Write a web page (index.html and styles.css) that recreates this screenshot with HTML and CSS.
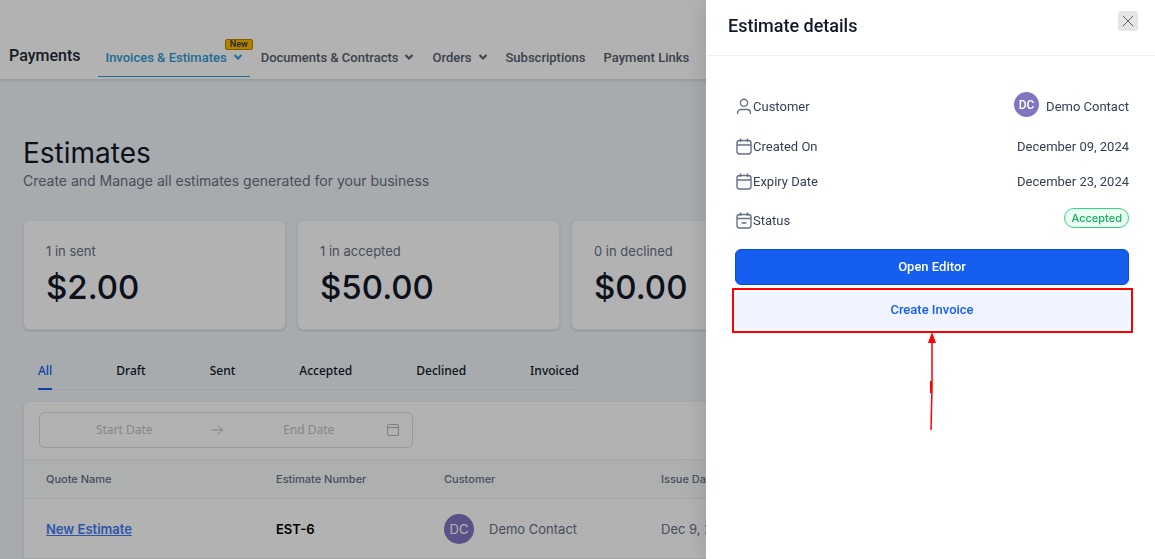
FILE: index.html
```
<!DOCTYPE html>
<html lang="en">
<head>
    <meta charset="UTF-8">
    <meta name="viewport" content="width=device-width, initial-scale=1.0">
    <title>Estimates</title>
    <link rel="stylesheet" href="styles.css">
</head>
<body>
    <header class="topbar">
        <h2 class="topbar-title">Payments</h2>
        <nav class="topnav">
            <a href="#invoices" class="topnav-link active">Invoices &amp; Estimates
                <svg class="chevron" viewBox="0 0 10 8"><path d="M1.5 1 5 4.5 8.5 1"/></svg>
                <span class="new-tag">New</span>
            </a>
            <a href="#documents" class="topnav-link">Documents &amp; Contracts
                <svg class="chevron" viewBox="0 0 10 8"><path d="M1.5 1 5 4.5 8.5 1"/></svg>
            </a>
            <a href="#orders" class="topnav-link">Orders
                <svg class="chevron" viewBox="0 0 10 8"><path d="M1.5 1 5 4.5 8.5 1"/></svg>
            </a>
            <a href="#subscriptions" class="topnav-link">Subscriptions</a>
            <a href="#links" class="topnav-link">Payment Links</a>
        </nav>
    </header>

    <main class="content">
        <h1>Estimates</h1>
        <p class="subtitle">Create and Manage all estimates generated for your business</p>

        <section class="stats">
            <div class="stat">
                <p class="stat-label">1 in sent</p>
                <p class="stat-value">$2.00</p>
            </div>
            <div class="stat">
                <p class="stat-label">1 in accepted</p>
                <p class="stat-value">$50.00</p>
            </div>
            <div class="stat">
                <p class="stat-label">0 in declined</p>
                <p class="stat-value">$0.00</p>
            </div>
            <div class="stat"></div>
        </section>

        <div class="tabs">
            <button type="button" class="tab active">All</button>
            <button type="button" class="tab">Draft</button>
            <button type="button" class="tab">Sent</button>
            <button type="button" class="tab">Accepted</button>
            <button type="button" class="tab">Declined</button>
            <button type="button" class="tab">Invoiced</button>
        </div>

        <section class="panel">
            <div class="date-range">
                <input type="text" placeholder="Start Date" aria-label="Start Date">
                <svg class="range-icon" viewBox="0 0 12 12"><path d="M.5 6h11M7 1.5 11.5 6 7 10.5"/></svg>
                <input type="text" placeholder="End Date" aria-label="End Date">
                <svg class="range-icon range-calendar" viewBox="0 0 12 12"><rect x=".5" y=".5" width="11" height="11" rx="1.5"/><path d="M.5 3.5h11"/></svg>
            </div>
            <table>
                <thead>
                    <tr>
                        <th class="col-name">Quote Name</th>
                        <th class="col-number">Estimate Number</th>
                        <th class="col-customer">Customer</th>
                        <th>Issue Date</th>
                    </tr>
                </thead>
                <tbody>
                    <tr>
                        <td><a href="#estimate" class="quote-link">New Estimate</a></td>
                        <td class="number">EST-6</td>
                        <td>
                            <div class="customer"><span class="avatar">DC</span>Demo Contact</div>
                        </td>
                        <td>Dec 9, 2024</td>
                    </tr>
                </tbody>
            </table>
        </section>
    </main>

    <div class="mask"></div>

    <aside class="drawer">
        <header class="drawer-header">
            <h2>Estimate details</h2>
            <button type="button" class="close" aria-label="Close">
                <svg viewBox="0 0 12 12"><path d="M.8.8l10.4 10.4M11.2.8.8 11.2"/></svg>
            </button>
        </header>
        <div class="drawer-body">
            <dl class="details">
                <div class="detail">
                    <dt>
                        <svg viewBox="0 0 18 18"><circle cx="9" cy="4.8" r="3.6"/><path d="M2.6 16v-1.2a3.3 3.3 0 0 1 3.3-3.3h6.2a3.3 3.3 0 0 1 3.3 3.3V16"/></svg>
                        Customer
                    </dt>
                    <dd class="contact"><span class="avatar avatar-small">DC</span>Demo Contact</dd>
                </div>
                <div class="detail">
                    <dt>
                        <svg viewBox="0 0 18 18"><rect x="2" y="2.5" width="14" height="13.5" rx="2.4"/><path d="M2 7h14M5.5.5V4M12.5.5V4"/></svg>
                        Created On
                    </dt>
                    <dd>December 09, 2024</dd>
                </div>
                <div class="detail">
                    <dt>
                        <svg viewBox="0 0 18 18"><rect x="2" y="2.5" width="14" height="13.5" rx="2.4"/><path d="M2 7h14M5.5.5V4M12.5.5V4"/></svg>
                        Expiry Date
                    </dt>
                    <dd>December 23, 2024</dd>
                </div>
                <div class="detail">
                    <dt>
                        <svg viewBox="0 0 18 18"><rect x="2" y="2.5" width="14" height="13.5" rx="2.4"/><path d="M2 6.5h14M5.5.5V4M12.5.5V4M6.5 11h5"/></svg>
                        Status
                    </dt>
                    <dd class="status">Accepted</dd>
                </div>
            </dl>
            <div class="actions">
                <button type="button" class="btn btn-primary">Open Editor</button>
                <div class="highlight">
                    <button type="button" class="btn btn-light">Create Invoice</button>
                    <svg class="arrow" viewBox="0 0 10 98"><path class="arrow-line" d="M5 8v46L4 98"/><path class="arrow-knot" d="M4 49v12"/><path class="arrow-head" d="M5 0 9 11H1z"/></svg>
                </div>
            </div>
        </div>
    </aside>
</body>
</html>
```
FILE: styles.css
```
* {
    margin: 0;
    padding: 0;
    box-sizing: border-box;
}

body {
    height: 100vh;
    overflow: hidden;
    font-family: Inter, sans-serif;
    font-size: 13px;
    line-height: 20px;
    color: #667085;
    background-color: #f0f5fa;
}

a {
    text-decoration: none;
}

button, input {
    font: inherit;
    border: none;
    background: none;
}

button {
    cursor: pointer;
}

svg {
    flex: none;
    fill: none;
    stroke: currentColor;
}

/* Top navigation */
.topbar {
    display: flex;
    align-items: flex-end;
    gap: 18px;
    height: 80px;
    padding: 0 9px 2px;
    font-family: Roboto, sans-serif;
    background-color: #fff;
    border-bottom: 1px solid #dde1e6;
    box-shadow: 0 1px 3px rgba(0, 0, 0, 0.12);
}

.topbar-title {
    padding-bottom: 10px;
    font-size: 16px;
    font-weight: 500;
    line-height: 22px;
    color: #1d2939;
}

.topnav {
    display: flex;
    gap: 4px;
}

.topnav-link {
    position: relative;
    display: flex;
    align-items: center;
    gap: 6px;
    padding: 0 7px 8px;
    border-bottom: 1px solid transparent;
    font-weight: 500;
    white-space: nowrap;
    color: #53606f;
}

.topnav-link.active {
    color: #2f9bd3;
    border-color: #2f9bd3;
}

.chevron {
    width: 10px;
    height: 8px;
    stroke-width: 2;
}

.new-tag {
    position: absolute;
    top: -9px;
    right: -3px;
    padding: 0 4px;
    font-size: 9px;
    line-height: 9px;
    color: #333;
    background-color: #fdb900;
    border: 1px solid #b98500;
    border-radius: 2px;
}

/* Page */
.content {
    padding: 55px 47px 0 23px;
}

h1 {
    font-size: 28px;
    font-weight: 400;
    line-height: 36px;
    color: #101828;
}

.subtitle {
    font-size: 14px;
    line-height: 20px;
}

.stats {
    display: grid;
    grid-template-columns: repeat(4, 1fr);
    gap: 11px;
    margin-top: 29px;
}

.stat {
    min-height: 110px;
    padding: 20px 22px;
    background-color: #fff;
    border: 1px solid #eaecf0;
    border-radius: 6px;
    box-shadow: 0 1px 2px rgba(16, 24, 40, 0.15);
}

.stat-label {
    font-size: 13px;
}

.stat-value {
    margin-top: 6px;
    font-size: 33px;
    font-weight: 500;
    line-height: 40px;
    color: #101828;
}

/* Status tabs */
.tabs {
    display: flex;
    gap: 64px;
    width: max-content;
    margin: 31px 0 11px 15px;
    border-bottom: 1px solid #e4e9ef;
}

.tab {
    margin-bottom: -1px;
    padding-bottom: 7px;
    border-bottom: 2px solid transparent;
    font-family: "Noto Sans", sans-serif;
    font-size: 12px;
    font-weight: 500;
    color: #101828;
}

.tab.active {
    color: #155eef;
    border-color: #155eef;
}

/* Estimates list */
.panel {
    background-color: #fff;
    border: 1px solid #eaecf0;
    border-radius: 6px 6px 0 0;
    box-shadow: 0 1px 2px rgba(16, 24, 40, 0.15);
}

.date-range {
    display: flex;
    align-items: center;
    gap: 12px;
    width: 374px;
    height: 36px;
    margin: 10px 15px 11px;
    padding: 0 13px 0 10px;
    border: 1px solid #d9dbe0;
    border-radius: 6px;
    color: #b5b7bb;
}

.date-range input {
    flex: 1;
    min-width: 0;
    font-family: "Noto Sans", sans-serif;
    font-size: 12px;
    text-align: center;
}

.date-range input::placeholder {
    color: #c2c2c2;
}

.range-icon {
    width: 12px;
    height: 12px;
}

.range-calendar {
    margin-left: -8px;
}

table {
    width: 100%;
    table-layout: fixed;
    border-collapse: collapse;
    text-align: left;
}

th, td {
    padding: 0 0 0 22px;
    border-top: 1px solid #eaecf0;
    border-bottom: 1px solid #eaecf0;
}

th {
    height: 39px;
    font-size: 11px;
    font-weight: 500;
    background-color: #f9fcfb;
}

td {
    height: 60px;
}

.col-name {
    width: 230px;
}

.col-number {
    width: 168px;
}

.col-customer {
    width: 217px;
}

.quote-link {
    font-weight: 600;
    color: #3f7cf4;
    text-decoration: underline;
}

.number {
    font-weight: 600;
    color: #000;
}

.customer {
    display: flex;
    align-items: center;
    gap: 15px;
}

.avatar {
    display: grid;
    place-items: center;
    width: 30px;
    height: 30px;
    color: #fff;
    background-color: #7f76c0;
    border-radius: 50%;
}

/* Drawer */
.mask {
    position: fixed;
    inset: 0;
    background-color: rgba(0, 0, 0, 0.3);
}

.drawer {
    position: fixed;
    top: 0;
    right: 0;
    bottom: 0;
    width: 449px;
    max-width: 100%;
    font-family: Roboto, sans-serif;
    color: #344054;
    background-color: #fff;
    box-shadow: 0 0 24px rgba(0, 0, 0, 0.15);
}

.drawer-header {
    display: flex;
    align-items: flex-start;
    justify-content: space-between;
    height: 56px;
    padding: 11px 17px 0 22px;
    border-bottom: 1px solid #efeff2;
}

.drawer-header h2 {
    font-size: 18px;
    font-weight: 500;
    line-height: 30px;
    color: #101828;
}

.close {
    display: grid;
    place-items: center;
    width: 20px;
    height: 20px;
    color: #5f5f5f;
    background-color: #e6e6e6;
    border-radius: 3px;
}

.close svg {
    width: 12px;
    height: 12px;
}

.drawer-body {
    padding: 36px 26px 0 29px;
}

.details {
    display: flex;
    flex-direction: column;
    gap: 15px;
}

.detail {
    display: flex;
    align-items: center;
    justify-content: space-between;
}

.detail:first-child {
    height: 30px;
}

.detail:last-child {
    height: 28px;
}

.detail dt {
    display: flex;
    align-items: center;
}

.detail dt svg {
    width: 18px;
    height: 18px;
    color: #667085;
    stroke-width: 1.4;
}

.contact {
    display: flex;
    align-items: center;
    align-self: stretch;
    gap: 7px;
}

.avatar-small {
    align-self: flex-start;
    width: 25px;
    height: 25px;
    font-size: 12px;
    font-weight: 500;
}

.status {
    align-self: flex-start;
    margin-top: 1px;
    padding: 0 6px;
    font-family: Inter, sans-serif;
    font-size: 11px;
    font-weight: 500;
    line-height: 18px;
    color: #12b15c;
    background-color: #ecfdf3;
    border: 1px solid #32d583;
    border-radius: 10px;
}

.actions {
    display: flex;
    flex-direction: column;
    gap: 7px;
    margin-top: 14px;
}

.btn {
    width: 100%;
    height: 36px;
    border-radius: 6px;
    font-weight: 500;
}

.btn-primary {
    color: #fff;
    background-color: #155eef;
    border: 1px solid #004eeb;
}

.btn-light {
    display: block;
    color: #155eef;
    background-color: #eff4ff;
    box-shadow: 0 1px 2px rgba(16, 24, 40, 0.05);
}

/* Callout around the button */
.highlight {
    position: relative;
}

.highlight::before {
    content: "";
    position: absolute;
    inset: -4px -4px -5px -3px;
    border: 2px solid #f00;
    pointer-events: none;
}

.arrow {
    position: absolute;
    top: 40px;
    left: 50%;
    width: 10px;
    height: 98px;
    margin-left: -5px;
}

.arrow-line, .arrow-knot {
    stroke: #f00;
    stroke-width: 1.5;
}

.arrow-knot {
    stroke-width: 2;
}

.arrow-head {
    fill: #f00;
    stroke: none;
}
```
